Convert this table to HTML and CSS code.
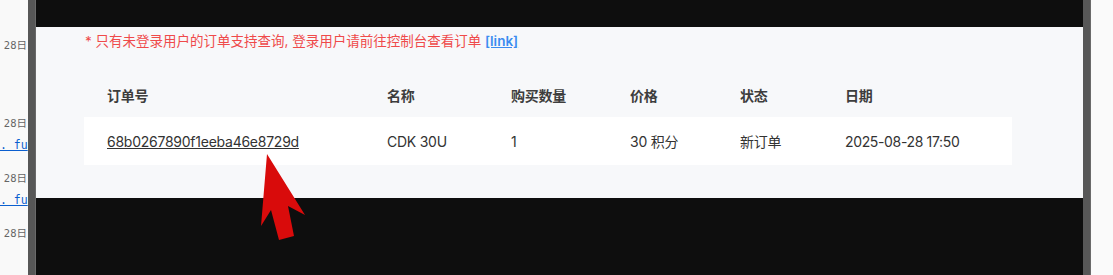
FILE: index.html
```html
<!DOCTYPE html>
<html lang="zh-CN">
<head>
<meta charset="utf-8">
<title>订单查询</title>
<link rel="stylesheet" href="styles.css">
</head>
<body>
<div class="page">
  <aside class="side-left">
    <div class="log-line log-first">28日</div>
    <div class="log-line log-gap-big">28日</div>
    <div class="log-line link-line"><a class="log-link" href="#">. fu</a></div>
    <div class="log-line log-gap">28日</div>
    <div class="log-line link-line"><a class="log-link" href="#">. fu</a></div>
    <div class="log-line log-gap">28日</div>
  </aside>
  <div class="bar"></div>
  <main class="viewer">
    <div class="dark-top"></div>
    <section class="panel">
      <p class="notice">* 只有未登录用户的订单支持查询, 登录用户请前往控制台查看订单 <a class="notice-link" href="#">[link]</a></p>
      <div class="table">
        <div class="row head">
          <div class="cell c1">订单号</div>
          <div class="cell c2">名称</div>
          <div class="cell c3">购买数量</div>
          <div class="cell c4">价格</div>
          <div class="cell c5">状态</div>
          <div class="cell c6">日期</div>
        </div>
        <div class="row body-row">
          <div class="cell c1"><a class="order-link" href="#">68b0267890f1eeba46e8729d</a></div>
          <div class="cell c2">CDK 30U</div>
          <div class="cell c3">1</div>
          <div class="cell c4">30 积分</div>
          <div class="cell c5">新订单</div>
          <div class="cell c6">2025-08-28 17:50</div>
        </div>
      </div>
    </section>
    <div class="dark-bottom"></div>
  </main>
  <div class="bar"></div>
  <aside class="side-right"></aside>
</div>
<svg class="arrow" width="1113" height="275" viewBox="0 0 1113 275" aria-hidden="true">
  <polygon points="267,154 305,215 288,206 294,236 279,240 271,210 261,226" fill="#d90b0b"/>
</svg>
</body>
</html>
```

FILE: styles.css
```css
html, body {
  margin: 0;
  padding: 0;
  width: 1113px;
  height: 275px;
  overflow: hidden;
  background: #fafafa;
}

.page {
  display: flex;
  height: 275px;
  font-family: Inter, "Noto Sans CJK SC", sans-serif;
}

.side-left {
  width: 28px;
  flex: none;
  background: #f9f9f9;
  overflow: hidden;
  font-family: "DejaVu Sans Mono", "Noto Sans CJK SC", monospace;
  font-size: 10.5px;
  color: #666;
}

.log-line {
  height: 22px;
  line-height: 22px;
  white-space: nowrap;
  display: flex;
  justify-content: flex-end;
  padding-right: 1px;
}

.link-line {
  justify-content: flex-start;
  padding-right: 0;
}

.log-first { margin-top: 34px; }
.log-gap-big { margin-top: 56px; }
.log-gap { margin-top: 11px; }

.log-link {
  color: #0b5fcf;
  font-size: 11.5px;
  text-decoration: underline;
}

.bar {
  width: 8px;
  flex: none;
  background: #575757;
  border-right: 1px solid #6a6a6a;
  box-sizing: border-box;
}

.viewer {
  width: 1047px;
  flex: none;
  display: flex;
  flex-direction: column;
  background: #0e0e0e;
}

.dark-top { height: 27px; }

.panel {
  height: 171px;
  box-sizing: border-box;
  background: #f7f8fa;
  padding: 4px 0 0 48px;
}

.dark-bottom { flex: 1; }

.notice {
  margin: 0 0 22px 1px;
  line-height: 20px;
  font-size: 13.5px;
  color: #ef4a4a;
}

.notice-link {
  color: #3b8cf0;
  font-weight: 600;
  text-decoration: underline;
}

.table {
  width: 928px;
  font-size: 14px;
  letter-spacing: -0.25px;
}

.row {
  display: flex;
  align-items: center;
}

.head {
  height: 44px;
  font-weight: 600;
  color: #3d3d3d;
}

.body-row {
  height: 48px;
  background: #ffffff;
  color: #333;
}

.cell {
  padding-left: 23px;
  box-sizing: border-box;
  white-space: nowrap;
}

.c1 { width: 280px; }
.c2 { width: 124px; }
.c3 { width: 119px; }
.c4 { width: 110px; }
.c5 { width: 105px; }
.c6 { width: 190px; letter-spacing: -0.35px; }

.order-link {
  color: #333;
  text-decoration: underline;
}

.side-right {
  flex: 1;
  background: #fafafa;
}

.arrow {
  position: absolute;
  left: 0;
  top: 0;
  pointer-events: none;
}
```
